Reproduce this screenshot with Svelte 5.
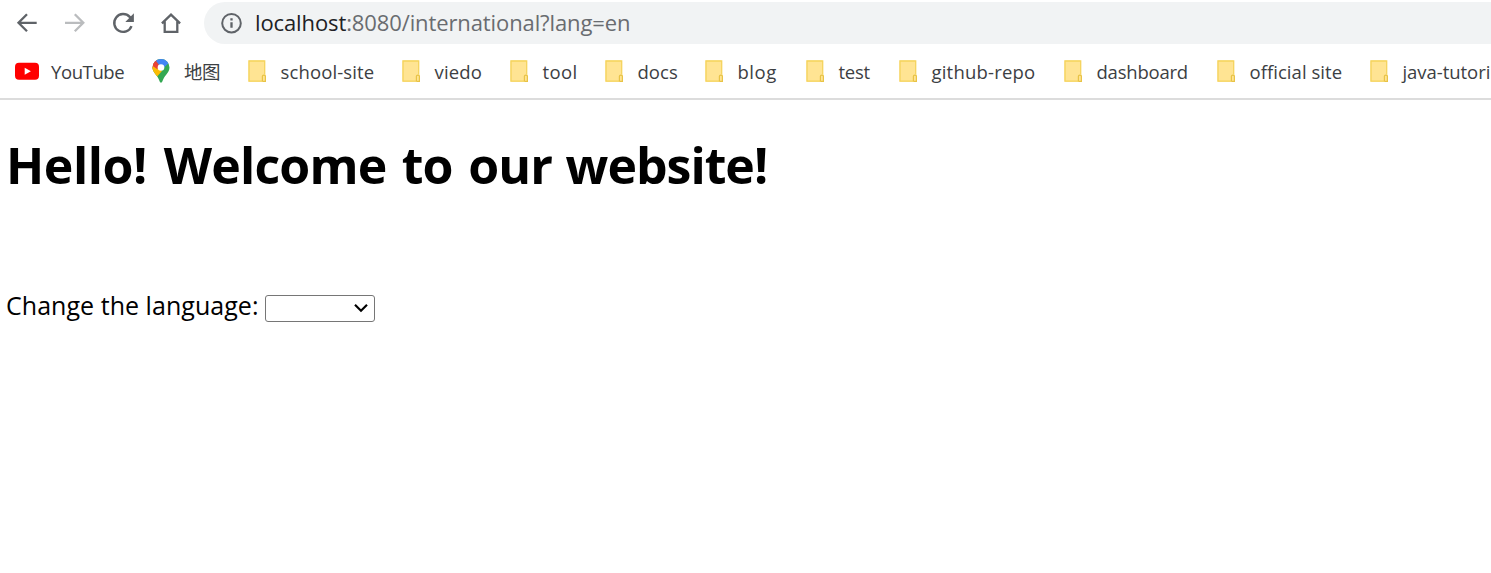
<script>
  const bookmarks = [
    { label: 'YouTube', icon: 'youtube', width: 137, spacing: -0.4 },
    { label: '地图', icon: 'maps', width: 96, spacing: -0.4 },
    { label: 'school-site', icon: 'folder', width: 154, spacing: 0.12 },
    { label: 'viedo', icon: 'folder', width: 108, spacing: 0.15 },
    { label: 'tool', icon: 'folder', width: 95, spacing: 0.35 },
    { label: 'docs', icon: 'folder', width: 100, spacing: 0.05 },
    { label: 'blog', icon: 'folder', width: 101, spacing: 0.55 },
    { label: 'test', icon: 'folder', width: 93, spacing: -0.3 },
    { label: 'github-repo', icon: 'folder', width: 165, spacing: 0.2 },
    { label: 'dashboard', icon: 'folder', width: 153, spacing: -0.22 },
    { label: 'official site', icon: 'folder', width: 153, spacing: 0.05 },
    { label: 'java-tutori', icon: 'folder', width: 121, spacing: -0.05 }
  ];
</script>

<div class="window">
  <nav class="toolbar">
    <button aria-label="Back"><svg width="24" height="24" viewBox="0 0 24 24"><path d="M21.700 11.800H3.500M12 3.300L3.500 11.800l8.500 8.500" fill="none" stroke="#5f6368" stroke-width="2.300"/></svg></button>
    <button aria-label="Forward"><svg width="24" height="24" viewBox="0 0 24 24"><path d="M2 11.800h18.300M11.800 3.300l8.500 8.500-8.500 8.500" fill="none" stroke="#babcbe" stroke-width="2.300"/></svg></button>
    <button aria-label="Reload"><svg width="24" height="24" viewBox="0 0 24 24"><path d="M20.500 15.100A8.900 8.900 0 1 1 18.700 5.900L20.500 8" fill="none" stroke="#5f6368" stroke-width="2.400"/><path d="M22.900 2.300v8.600h-8.600z" fill="#5f6368"/></svg></button>
    <button aria-label="Home"><svg width="24" height="24" viewBox="0 0 24 24"><path d="M2.900 12.300L12 3.700l9.100 8.600M5.700 10.500v10.300h12.600V10.500" fill="none" stroke="#5f6368" stroke-width="2.300"/></svg></button>
    <div class="address">
      <svg width="22" height="22" viewBox="0 0 22 22"><circle cx="10.500" cy="11.200" r="9.300" fill="none" stroke="#5f6368" stroke-width="2"/><path d="M10.500 10.200v5.500M10.500 6.200v2.200" stroke="#5f6368" stroke-width="2.300"/></svg>
      <span class="url"><b>localhost</b>:8080/international?lang=en</span>
    </div>
  </nav>
  <div class="bookmarks">
    {#each bookmarks as item}
      <div class="bookmark" style:width="{item.width}px">
        {#if item.icon === 'youtube'}
          <svg class="icon" width="24" height="26" viewBox="0 0 24 26"><rect y="3.700" width="24" height="17" rx="4" fill="#f00"/><path d="M9.700 8.800l6.200 3.500-6.200 3.500z" fill="#fff"/></svg>
        {:else if item.icon === 'maps'}
          <svg class="icon" width="18" height="26" viewBox="0 0 18 26">
            <defs><clipPath id="pin"><path d="M9 0a8.500 8.500 0 0 0-8.500 8.500c0 5 5 7.500 7 13.500.7 2.200 2.300 2.200 3 0 2-6 7-8.500 7-13.500A8.500 8.500 0 0 0 9 0z"/></clipPath></defs>
            <g clip-path="url(#pin)"><path d="M0 0h18v26H0z" fill="#34a853"/><path d="M0 0h5l4 9-5 5-4-4z" fill="#ea4335"/><path d="M2.500 3L6 0h12v3L7 13 9 8z" fill="#4285f4"/><path d="M0 8l3-2 7 6-7 8-3-3z" fill="#fbbc04"/><path d="M0 0h2.500L9 8.500 5 10 0 6.500z" fill="#ea4335"/></g><circle cx="9" cy="8.500" r="3.300" fill="#fff"/>
          </svg>
        {:else}
          <svg class="icon" width="19" height="26" viewBox="0 0 19 26"><path d="M.5 1.500h16v14h1.300v7.300H.5z" fill="#ffe493"/><path d="M1 22.500V2h15.700v13.500M.5 22.100h14" fill="none" stroke="#f5d35c" stroke-width="1.300"/><path d="M14.400 22.300v-5q0-1.200 1.500-1.200t1.500 1.200v5h-3" fill="#ffe493" stroke="#e8c346" stroke-width="1.200"/></svg>
        {/if}
        <span class="label" class:wide={item.icon === 'youtube'} class:folder={item.icon === 'folder'} style:letter-spacing="{item.spacing}px">{item.label}</span>
      </div>
    {/each}
  </div>
  <main>
    <h1><span class="greeting">Hello!</span> Welcome to our <span class="site">website!</span></h1>
    <div class="language">
      <span class="prompt">Change the language:</span>
      <button class="select" aria-label="Language"><svg width="16" height="12" viewBox="0 0 16 12"><path d="M2 2.700l6 6 6-6" fill="none" stroke="#000" stroke-width="2.200"/></svg></button>
    </div>
  </main>
</div>

<style>
  :global(body) { background: #fff; }
  .window { height: 573px; overflow: hidden; font-family: "Open Sans", "Noto Sans CJK SC", sans-serif; }
  button { padding: 0; border: 0; background: none; display: flex; }
  .toolbar { display: flex; align-items: center; height: 46px; padding-left: 15px; }
  .toolbar > button { width: 48px; flex: none; }
  .address { display: flex; align-items: center; flex: 1; height: 42px; margin-left: -3px; padding-left: 17px; border-radius: 21px 0 0 21px; background: #f1f3f4; box-sizing: border-box; }
  .url { margin: 0 0 2px 12px; color: #696c70; font-size: 22px; letter-spacing: -0.11px; white-space: nowrap; }
  .url b { color: #202124; font-weight: 400; }
  .bookmarks { display: flex; align-items: center; height: 52px; padding-left: 15px; border-bottom: 2px solid #dcdcdc; overflow: hidden; }
  .bookmark { display: flex; align-items: center; flex: none; white-space: nowrap; }
  .icon { flex: none; }
  .label { margin-left: 14px; color: #3c4043; font-size: 18.500px; line-height: 26px; }
  .label.wide { margin-left: 12px; }
  .label.folder { margin-left: 13.500px; }
  main { padding-left: 6px; }
  h1 { margin: 28px 0 0; font-size: 50px; line-height: 74px; font-weight: 700; letter-spacing: -0.85px; word-spacing: 3.300px; white-space: nowrap; }
  .greeting { margin-right: 1.500px; letter-spacing: -0.45px; }
  .site { margin-left: -2px; letter-spacing: -1px; }
  .language { display: flex; align-items: center; margin-top: 85px; height: 40px; }
  .prompt { width: 259px; margin-bottom: 4px; font-size: 25px; letter-spacing: 0.04px; white-space: nowrap; }
  .select { width: 110px; height: 27px; margin-top: 2px; border: 1px solid #767676; border-radius: 3px; align-items: center; justify-content: flex-end; padding-right: 5px; background: #fff; box-sizing: border-box; }
</style>
